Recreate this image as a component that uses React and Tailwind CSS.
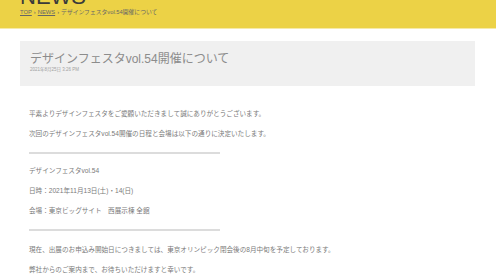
const jp = "font-['Liberation_Sans','Noto_Sans_CJK_JP',sans-serif]";

function Rule() {
  return <div className="h-[2px] w-[191px] bg-[#dcdcdc]" />;
}

export default function App() {
  return (
    <div className={`min-h-[279px] w-[496px] overflow-hidden bg-white ${jp}`}>
      {/* yellow page header, title scrolled mostly out of view */}
      <header className="flex h-[29px] flex-col overflow-hidden border-b border-[#f6eaa8] bg-[#ecd246] px-[20px]">
        <div className="mt-[-14px] text-[22px] leading-[22px] text-[#3a3a3a]">NEWS</div>
        <div className="mt-[1px] text-[5.8px] leading-[6px] text-[#666]">
          <span className="underline">TOP</span>
          <span className="mx-[2px]">›</span>
          <span className="underline">NEWS</span>
          <span className="mx-[2px]">›</span>
          <span>デザインフェスタvol.54開催について</span>
        </div>
      </header>

      <main className="px-[20px]">
        <div className="mt-[12px] h-[45px] w-[455px] bg-[#f0f0f0] pl-[10px] pt-[10px]">
          <h1 className="text-[12px] leading-[16px] text-[#8c8c8c]">
            デザインフェスタvol.54開催について
          </h1>
          <p className="text-[4.5px] leading-[6px] text-[#a0a0a0]">2021年8月25日 3:26 PM</p>
        </div>

        <div className="mt-[23px] flex flex-col gap-[10px] pl-[9px] text-[6.6px] leading-[10px] text-[#7a7a7a]">
          <p>平素よりデザインフェスタをご愛顧いただきまして誠にありがとうございます。</p>
          <p>次回のデザインフェスタvol.54開催の日程と会場は以下の通りに決定いたします。</p>
          <div className="mb-[2px] mt-[3px]">
            <Rule />
          </div>
          <p>デザインフェスタvol.54</p>
          <p>日時：2021年11月13日(土)・14(日)</p>
          <p>会場：東京ビッグサイト　西展示棟 全館</p>
          <div className="mb-[4px] mt-[3px]">
            <Rule />
          </div>
          <p>現在、出展のお申込み開始日につきましては、東京オリンピック閉会後の8月中旬を予定しております。</p>
          <p>弊社からのご案内まで、お待ちいただけますと幸いです。</p>
        </div>
      </main>
    </div>
  );
}
